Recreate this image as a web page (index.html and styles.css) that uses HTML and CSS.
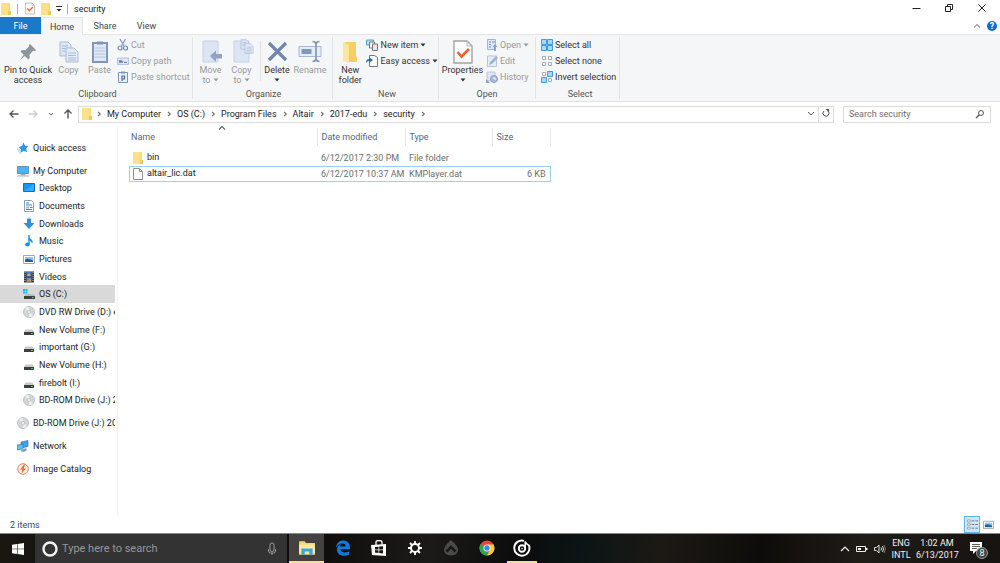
FILE: index.html
```html
<!DOCTYPE html>
<html lang="en">
<head>
  <meta charset="UTF-8" />
  <meta name="viewport" content="width=device-width, initial-scale=1.0" />
  <title>security</title>
  <link rel="stylesheet" href="styles.css">
</head>
<body>
  <!-- shared icons -->
  <svg class="defs" aria-hidden="true">
    <symbol id="folder" viewBox="0 0 12 14">
      <path d="M1 1h9v8l1 1v3H1z" fill="#fbdc7d"/>
      <path d="M1 1h7v12H1z" fill="#ffe08a"/>
      <path d="M8 9h3v4H8z" fill="#f0c75a"/>
    </symbol>
    <symbol id="check" viewBox="0 0 20 26">
      <path d="M1 2h13l5 5v17H1z" fill="#fcfcfc" stroke="#a3a3a3" stroke-width="1.4"/>
      <path d="M14 2v5h5" fill="none" stroke="#b5b5b5"/>
      <path d="M4.500 13l4 4.500L16 10" fill="none" stroke="#f1622b" stroke-width="2.600"/>
    </symbol>
    <symbol id="sheets" viewBox="0 0 20 22">
      <path d="M1 1h8l3 3v11H1z" fill="#dce6f4" stroke="#a9bbd8"/>
      <path d="M3 5h6M3 7.500h6M3 10h4" stroke="#a9bbd8"/>
      <path d="M7 7h8l4 4v10H7z" fill="#e3ebf7" stroke="#a9bbd8"/>
      <path d="M9 12h8M9 14.500h8M9 17h8M9 19h8" stroke="#a9bbd8"/>
    </symbol>
    <symbol id="disc" viewBox="0 0 12 12">
      <circle cx="6" cy="6" r="5.500" fill="#d3d6d8" stroke="#b0b3b5" stroke-width=".7"/>
      <path d="M6 6L2 2.500A5 5 0 0 1 6 1zM6 6l4 3.500A5 5 0 0 1 6 11z" fill="#eceeef"/>
      <circle cx="6" cy="6" r="1.500" fill="#f8f8f8" stroke="#aaa" stroke-width=".6"/>
    </symbol>
    <symbol id="drive" viewBox="0 0 12 12">
      <path d="M2.500 5.500h7L11 8H1z" fill="#c9c9c9"/>
      <path d="M1 8h10v3H1z" fill="#3d4040"/>
      <path d="M8 9h2v1H8z" fill="#58c158"/>
    </symbol>
    <symbol id="image" viewBox="0 0 12 12">
      <path d="M.5 2.500h11v8H.5z" fill="#fff" stroke="#a0a6aa"/>
      <path d="M2 4h8v3H2z" fill="#8cc6ee"/>
      <path d="M2 6.500l3-.8 5 1.500V9H2z" fill="#2d5c91"/>
    </symbol>
    <symbol id="caret" viewBox="0 0 6 6"><path d="M.5 1.500h5L3 4.500z" fill="currentColor"/></symbol>
    <symbol id="sep" viewBox="0 0 6 6"><path d="M2 .8L4.300 3 2 5.200" fill="none" stroke="#666" stroke-width="1.100"/></symbol>
    <symbol id="up" viewBox="0 0 8 8"><path d="M1 5.500L4 2.500l3 3" fill="none" stroke="currentColor" stroke-width="1.200"/></symbol>
  </svg>

  <div class="window">
    <header class="titlebar">
      <svg class="ico-folder"><use href="#folder"/></svg>
      <span class="bar"></span>
      <svg class="ico-quick"><use href="#check"/></svg>
      <svg class="ico-folder"><use href="#folder"/></svg>
      <svg class="ico-menu" viewBox="0 0 6 8"><path d="M0 1.500h6" stroke="#333"/><path d="M.5 4h5L3 6.500z" fill="#222"/></svg>
      <span class="bar"></span>
      <span class="title">security</span>
      <div class="controls">
        <button aria-label="Minimize"><svg viewBox="0 0 10 10"><path d="M1.500 5.500h8" stroke="#222"/></svg></button>
        <button aria-label="Restore"><svg viewBox="0 0 10 10"><path d="M1.500 3.500h5v5h-5zM3.500 3.500v-2h5v5h-2" fill="none" stroke="#222"/></svg></button>
        <button aria-label="Close"><svg viewBox="0 0 10 10"><path d="M1.500 1.500l7 7M8.500 1.500l-7 7" stroke="#222"/></svg></button>
      </div>
    </header>

    <nav class="tabs">
      <button class="tab file">File</button>
      <button class="tab active">Home</button>
      <button class="tab share">Share</button>
      <button class="tab">View</button>
      <div class="tab-tools">
        <button aria-label="Collapse ribbon"><svg class="ico-small"><use href="#up"/></svg></button>
        <button class="help" aria-label="Help">?</button>
      </div>
    </nav>

    <div class="ribbon">
      <section class="group clipboard">
        <div class="tools">
          <button class="big pin">
            <svg viewBox="0 0 24 26"><path d="M14 5l6 6-1 1-2-.3-3.500 4 .2 3.300-1.400 1.400-3.400-3.400L4 21l3.700-5.200-3.300-3.300L6 11l3.300.2 3.600-3.700L13 6z" fill="#8b959e"/></svg>
            <span>Pin to Quick</span>
            <span>access</span>
          </button>
          <button class="big copy" disabled>
            <svg viewBox="-2 -2 24 26"><use href="#sheets" width="20" height="22"/></svg>
            <span>Copy</span>
          </button>
          <button class="big paste" disabled>
            <svg viewBox="0 0 24 26"><path d="M5 4h14v19H5z" fill="#dfe8f5" stroke="#8195bb" stroke-width="2"/><path d="M9 2.500h6v3H9z" fill="#8195bb"/><path d="M7 9h10M7 12h10M7 15h10M7 18h10" stroke="#b6c4dd"/></svg>
            <span>Paste</span>
          </button>
          <div class="stack">
            <button disabled><svg viewBox="0 0 12 12"><path d="M3 0l4 7M8.500 0l-4 7" stroke="#8b9dbd" stroke-width="1.300"/><circle cx="3" cy="9" r="2" fill="none" stroke="#7188b1" stroke-width="1.200"/><circle cx="8.500" cy="9" r="2" fill="none" stroke="#7188b1" stroke-width="1.200"/></svg>Cut</button>
            <button disabled><svg viewBox="0 0 12 12"><path d="M.5 3h11v6.500H.5z" fill="#dbe5f4" stroke="#b4c3de"/><path d="M2 5l1 3 1-3 1 3 1-2M7 7.500h3" fill="none" stroke="#6d82a9"/></svg>Copy path</button>
            <button disabled><svg viewBox="0 0 12 12"><path d="M1.500 1.500h9v10h-9z" fill="#e9eff8" stroke="#7c93bc"/><path d="M4 .5h4v2H4z" fill="#7c93bc"/><path d="M5 10V5h2.500v3H5" fill="none" stroke="#506b9c" stroke-width="1.200"/></svg>Paste shortcut</button>
          </div>
        </div>
        <h2>Clipboard</h2>
      </section>

      <section class="group organize">
        <div class="tools">
          <button class="big narrow" disabled>
            <svg viewBox="0 0 24 26"><path d="M4 2h15v21H4z" fill="#dbe5f4" stroke="#c5d3e8"/><path d="M11 17l6-5.500V15h6v4.500h-6V23z" fill="#91a3c2"/></svg>
            <span>Move</span>
            <span>to <svg class="caret"><use href="#caret"/></svg></span>
          </button>
          <button class="big narrow" disabled>
            <svg viewBox="0 0 24 26"><path d="M4 2h15v21H4z" fill="#dbe5f4" stroke="#c5d3e8"/><use href="#sheets" x="10" y="0" width="14" height="15"/></svg>
            <span>Copy</span>
            <span>to <svg class="caret"><use href="#caret"/></svg></span>
          </button>
          <span class="divider"></span>
          <button class="big delete">
            <svg viewBox="0 0 24 26"><path d="M4 4l17 17M21 4L4 21" stroke="#7186ad" stroke-width="3.200"/></svg>
            <span>Delete</span>
            <span><svg class="caret"><use href="#caret"/></svg></span>
          </button>
          <button class="big" disabled>
            <svg viewBox="0 0 24 26"><path d="M1 7.500h22v10H1z" fill="#e5edf8" stroke="#a6b7d4"/><path d="M3.500 10h10v5h-10z" fill="#8297be"/><path d="M18 5v16M14.500 2.500q3.500 0 3.500 3 0-3 3.500-3M14.500 22.500q3.500 0 3.500-3 0 3 3.500 3" fill="none" stroke="#8297be" stroke-width="1.700"/></svg>
            <span>Rename</span>
          </button>
        </div>
        <h2>Organize</h2>
      </section>

      <section class="group new">
        <div class="tools">
          <button class="big narrow">
            <svg viewBox="0 0 24 26"><path d="M7 3h11v14l1 2v4H7z" fill="#f7ce65"/><path d="M5 3l6 3v18l-6-2z" fill="#ffe69b"/></svg>
            <span>New</span>
            <span>folder</span>
          </button>
          <div class="stack">
            <button><svg viewBox="0 0 12 12"><path d="M.5 1h7v5h-7z" fill="#bfe0f3" stroke="#569dc5"/><path d="M3.500 3h5v6h-5z" fill="#f5f5f5" stroke="#777"/><path d="M6.500 5h5v6.500h-5z" fill="#e8e8e8" stroke="#777"/></svg>New item <svg class="caret"><use href="#caret"/></svg></button>
            <button><svg viewBox="0 0 12 12"><path d="M3.500.5h5l3 2v9h-8z" fill="#fafafa" stroke="#777"/><path d="M0 8q0-4 3-4V2l4 3-4 3V6Q1 6 0 8z" fill="#2b6fb0"/></svg>Easy access <svg class="caret"><use href="#caret"/></svg></button>
          </div>
        </div>
        <h2>New</h2>
      </section>

      <section class="group open">
        <div class="tools">
          <button class="big">
            <svg viewBox="-2 0 24 26"><use href="#check" width="20" height="26"/></svg>
            <span>Properties</span>
            <span><svg class="caret"><use href="#caret"/></svg></span>
          </button>
          <div class="stack">
            <button disabled><svg viewBox="0 0 12 12"><path d="M1.500.5h8v10h-8z" fill="#dce6f4" stroke="#a5b6d3"/><path d="M3 3h2M3 5.500h2M3 8h2M6 3h3" stroke="#768db6"/><path d="M8 12V8H6.500L9 5l2.500 3H10v4z" fill="#8ca0c5"/></svg>Open <svg class="caret"><use href="#caret"/></svg></button>
            <button disabled><svg viewBox="0 0 12 12"><path d="M1.500 1h9v10.500h-9z" fill="#e7eef8" stroke="#b6c4dd"/><path d="M3 10l1-3 6-6 2 2-6 6z" fill="#a2b4d4"/></svg>Edit</button>
            <button disabled><svg viewBox="0 0 12 12"><path d="M1 1h8v9H1z" fill="#dce6f4" stroke="#bac8df"/><circle cx="8" cy="8" r="3.500" fill="#a8b9d8" stroke="#8ba0c6"/><path d="M8 6v2h2" fill="none" stroke="#fff"/><path d="M0 8l4 4H0z" fill="#8ba0c6"/></svg>History</button>
          </div>
        </div>
        <h2>Open</h2>
      </section>

      <section class="group select">
        <div class="tools">
          <div class="stack">
            <button><svg viewBox="0 0 12 12"><path d="M.5.500h5v5h-5zM6.500.500h5v5h-5zM.5 6.500h5v5h-5zM6.500 6.500h5v5h-5z" fill="#a5d7fa" stroke="#3d9be0"/></svg>Select all</button>
            <button><svg viewBox="0 0 12 12"><path d="M1.500 1.500h3v3h-3zM7.500 1.500h3v3h-3zM1.500 7.500h3v3h-3zM7.500 7.500h3v3h-3z" fill="#fff" stroke="#aaa"/></svg>Select none</button>
            <button><svg viewBox="0 0 12 12"><path d="M1.500 1.500h3v3h-3zM7.500 7.500h3v3h-3z" fill="#fff" stroke="#aaa"/><path d="M6.500.500h5v5h-5zM.5 6.500h5v5h-5z" fill="#a5d7fa" stroke="#3d9be0"/></svg>Invert selection</button>
          </div>
        </div>
        <h2>Select</h2>
      </section>
    </div>

    <div class="address">
      <div class="arrows">
        <button aria-label="Back"><svg viewBox="0 0 10 10"><path d="M9.500 5H1M4.500 1.500L1 5l3.500 3.500" fill="none" stroke="#555" stroke-width="1.300"/></svg></button>
        <button aria-label="Forward"><svg viewBox="0 0 10 10"><path d="M.5 5H9M5.500 1.500L9 5 5.500 8.500" fill="none" stroke="#ccc" stroke-width="1.300"/></svg></button>
        <button class="recent" aria-label="Recent locations"><svg viewBox="0 0 6 6"><path d="M1 2l2 2 2-2" fill="none" stroke="#666"/></svg></button>
        <button aria-label="Up"><svg viewBox="0 0 10 10"><path d="M5 9.500V1M1.500 4.500L5 1l3.500 3.500" fill="none" stroke="#555" stroke-width="1.400"/></svg></button>
      </div>
      <div class="path">
        <svg class="ico-folder"><use href="#folder"/></svg>
        <svg class="sep"><use href="#sep"/></svg><a href="#">My Computer</a>
        <svg class="sep"><use href="#sep"/></svg><a href="#">OS (C:)</a>
        <svg class="sep"><use href="#sep"/></svg><a href="#">Program Files</a>
        <svg class="sep"><use href="#sep"/></svg><a href="#">Altair</a>
        <svg class="sep"><use href="#sep"/></svg><a href="#">2017-edu</a>
        <svg class="sep"><use href="#sep"/></svg><a href="#">security</a>
        <svg class="sep"><use href="#sep"/></svg>
        <div class="path-tools">
          <button aria-label="Previous locations"><svg viewBox="0 0 8 8"><path d="M1 3l3 3 3-3" fill="none" stroke="#555"/></svg></button>
          <button class="refresh" aria-label="Refresh"><svg viewBox="0 0 8 8"><path d="M6 2a3 3 0 1 1-4 0" fill="none" stroke="#555"/><path d="M3.500 0h3.500v3.500z" fill="#555"/></svg></button>
        </div>
      </div>
      <div class="search">
        <input type="text" placeholder="Search security" aria-label="Search security">
        <svg viewBox="0 0 10 10"><circle cx="6" cy="4" r="2.500" fill="none" stroke="#555"/><path d="M4.300 5.700L1 9" stroke="#555" stroke-width="1.300"/></svg>
      </div>
    </div>

    <main class="content">
      <nav class="sidebar">
        <a href="#"><svg viewBox="0 0 12 12"><path d="M6.500.500l1.600 3.300 3.400.200-2.400 2.600.9 3.600-3.300-1.500-3 2.100.3-3.600L1.500 5l3.400-.9z" fill="#2e96e8"/><path d="M1 9h3M2 11h2M0 7h3" stroke="#7cbcf0" stroke-width=".8"/></svg>Quick access</a>
        <div class="tree">
          <a class="root" href="#"><svg viewBox="0 0 12 12"><path d="M.5 1.500h11v7H.5z" fill="#47b4f4" stroke="#6b93ac"/><path d="M4 9h4l1 1.500H3z" fill="#a0adb5"/><path d="M0 11h12" stroke="#aab4ba"/></svg>My Computer</a>
          <a href="#"><svg viewBox="0 0 12 12"><path d="M.5 1.500h11v8H.5z" fill="#1596f5" stroke="#0b70c2"/><path d="M1 9L11 2v7z" fill="#30adff"/></svg>Desktop</a>
          <a href="#"><svg viewBox="0 0 12 12"><path d="M1.500.5h7l2 2v9h-9z" fill="#fff" stroke="#8c9fac"/><path d="M3 3h3M3 5h6M7 7.500h2.500M3 9.500h6" stroke="#3a89bb"/><path d="M3 6.500h3v2H3z" fill="#86bde0"/></svg>Documents</a>
          <a href="#"><svg viewBox="0 0 12 12"><path d="M4 .5h4V5h3.500L6 11 .5 5H4z" fill="#338fdd"/></svg>Downloads</a>
          <a href="#"><svg viewBox="0 0 12 12"><path d="M6 .5q0 2.500 3 4.500 1.500 1.500 0 4 0-2.500-3-3.500v4" fill="#1492e8"/><path d="M6 0v9" stroke="#1492e8" stroke-width="1.400"/><ellipse cx="4.500" cy="9.500" rx="2.300" ry="1.900" fill="#1492e8"/></svg>Music</a>
          <a href="#"><svg><use href="#image"/></svg>Pictures</a>
          <a href="#"><svg viewBox="0 0 12 12"><path d="M1 .5h10v11H1z" fill="#383838"/><path d="M3.500 1h5v4.500h-5z" fill="#4c7cc9"/><path d="M3.500 6.500h5V11h-5z" fill="#5e88c4"/><path d="M4 4l2-2 2 3H4zM4 10l3-2 1 2z" fill="#d9a944"/><path d="M2 1v10M10 1v10" stroke="#ccc" stroke-dasharray="1 1"/></svg>Videos</a>
          <a class="current" href="#"><svg viewBox="0 0 12 12"><path d="M0 1h2v2H0zM2.500 1h2v2h-2zM0 3.500h2v2H0zM2.500 3.500h2v2h-2z" fill="#18b5f0"/><path d="M3.500 6h7L12 8H1z" fill="#bbb"/><path d="M1 8h11v3H1z" fill="#3d4040"/><path d="M9 9h2v1H9z" fill="#58c158"/></svg>OS (C:)</a>
          <a href="#"><svg><use href="#disc"/></svg>DVD RW Drive (D:) e</a>
          <a href="#"><svg><use href="#drive"/></svg>New Volume (F:)</a>
          <a href="#"><svg><use href="#drive"/></svg>important (G:)</a>
          <a href="#"><svg><use href="#drive"/></svg>New Volume (H:)</a>
          <a href="#"><svg><use href="#drive"/></svg>firebolt (I:)</a>
          <a href="#"><svg><use href="#disc"/></svg>BD-ROM Drive (J:) 2</a>
        </div>
        <a href="#"><svg><use href="#disc"/></svg>BD-ROM Drive (J:) 201</a>
        <a href="#"><svg viewBox="0 0 12 12"><path d="M4 2l7-1.500v6L4 8z" fill="#40a4e5" stroke="#276f9f" stroke-width=".6"/><path d="M0 5l6-1v5l-6 1z" fill="#63bef2" stroke="#276f9f" stroke-width=".6"/><path d="M3 11l6-3 1 2-3 2z" fill="#7f9cae"/></svg>Network</a>
        <a href="#"><svg viewBox="0 0 12 12"><circle cx="6" cy="6" r="5.300" fill="#fff3ea" stroke="#cb6a3c" stroke-width=".8"/><path d="M7 1.500L3 6.500h2.500L4.500 10.500 9 5.500H6.500L8 1.500z" fill="#ef6522"/></svg>Image Catalog</a>
      </nav>

      <div class="files">
        <table>
          <thead>
            <tr>
              <th class="name">Name<svg class="sort"><use href="#up"/></svg></th>
              <th class="date">Date modified</th>
              <th class="type">Type</th>
              <th class="size">Size</th>
            </tr>
          </thead>
          <tbody>
            <tr>
              <td><svg><use href="#folder"/></svg>bin</td>
              <td>6/12/2017 2:30 PM</td>
              <td>File folder</td>
              <td></td>
            </tr>
            <tr class="focused">
              <td><svg viewBox="0 0 12 14"><path d="M1.500 1.500h6l3 3v8h-9z" fill="#fff" stroke="#909090"/><path d="M7.500 1.500v3h3" fill="none" stroke="#909090"/></svg>altair_lic.dat</td>
              <td>6/12/2017 10:37 AM</td>
              <td>KMPlayer.dat</td>
              <td>6 KB</td>
            </tr>
          </tbody>
        </table>
      </div>
    </main>

    <footer class="status">
      <span>2 items</span>
      <div class="views">
        <button class="on" aria-label="Details view"><svg viewBox="0 0 12 12"><path d="M.5 1h3v2h-3zM.5 5h3v2h-3zM.5 9h3v2h-3z" fill="#fff" stroke="#a87979" stroke-width=".7"/><path d="M5 2h3M9 2h3M5 6h3M9 6h3M5 10h3M9 10h3" stroke="#607b8b"/></svg></button>
        <button aria-label="Large icons view"><svg><use href="#image"/></svg></button>
      </div>
    </footer>
  </div>

  <div class="taskbar">
    <button class="start" aria-label="Start"><svg viewBox="0 0 12 12"><path d="M0 1.700l5-.7v4.700H0zM5.600.9L12 0v5.700H5.600zM0 6.300h5V11l-5-.7zM5.600 6.300H12V12l-6.400-.9z" fill="#fff"/></svg></button>
    <label class="cortana">
      <svg class="ring" viewBox="0 0 16 16"><circle cx="8" cy="8" r="6.500" fill="none" stroke="#f2f2f2" stroke-width="2.400"/></svg>
      <input type="text" placeholder="Type here to search" aria-label="Type here to search">
      <svg class="mic" viewBox="0 0 10 14"><path d="M3 3q0-2 2-2t2 2v5q0 1.500-2 1.500T3 8zM1.500 7v2q0 2 2 2h3q2 0 2-2V7M5 11v2" fill="none" stroke="#999"/></svg>
    </label>
    <div class="apps">
      <button class="running active" aria-label="File Explorer"><svg viewBox="0 0 16 16"><path d="M1 2h5l1 1.500h8V14H1z" fill="#f7d774"/><path d="M1 5h14v8H1z" fill="#ffe9a2"/><path d="M3 14V8.500h10V14h-3v-3H6v3z" fill="#3ba7dc"/></svg></button>
      <button aria-label="Edge"><svg viewBox="0 0 16 16"><path d="M1 7.500C1.500 3 4.500.5 8.300.5 12.500.5 15 3.500 15 7.500v1.800H5.500c.2 2.200 2 3.200 4.300 3.200 1.700 0 3.200-.5 4.400-1.200v3.200c-1.400.8-3.200 1.200-5.200 1.200-4.300 0-7-2.400-7-6 0-2.500 1.500-4.600 4-5.700-.6.800-.9 1.700-.9 2.500h5.600c0-1.900-.9-2.900-3-2.900-2.600 0-5 1.400-6.700 3.900z" fill="#0e7bdc"/></svg></button>
      <button aria-label="Store"><svg viewBox="0 0 16 16"><path d="M0 5l15-1v12L1 15z" fill="#fff"/><path d="M5 5V2q0-1.500 3-1.500T11 2v2.500" fill="none" stroke="#fff" stroke-width="1.300"/><path d="M4 7l3.500-.3v2.800H4zM8.200 6.600L12 6.300v3.200H8.200zM4 10.200h3.500V13L4 12.600zM8.200 10.200H12v3.200l-3.800-.4z" fill="#151515"/></svg></button>
      <button aria-label="Settings"><svg viewBox="0 0 16 16"><circle cx="8" cy="8" r="4" fill="none" stroke="#fff" stroke-width="2"/><path d="M8 1v3M8 12v3M1 8h3M12 8h3M3 3l2 2M11 11l2 2M13 3l-2 2M5 11l-2 2" stroke="#fff" stroke-width="1.800"/></svg></button>
      <button aria-label="Launcher"><svg viewBox="0 0 16 16"><path d="M8 0q7 6 7 10 0 5-7 5.500Q1 15 1 10q0-4 7-10z" fill="#4a4a4a"/><path d="M3.500 11.500L8 7l4.500 4.500" fill="none" stroke="#191919" stroke-width="2.500"/></svg></button>
      <button aria-label="Chrome"><svg viewBox="0 0 16 16"><circle cx="8" cy="8" r="7.500" fill="#e8453c"/><path d="M1.500 4.200L8 8l0 7.500A7.500 7.500 0 0 1 1.500 4.200z" fill="#2fa653"/><path d="M8 4.500h6.600A7.500 7.500 0 0 1 8 15.500L11 10z" fill="#fbcd38"/><circle cx="8" cy="8" r="3.500" fill="#fff"/><circle cx="8" cy="8" r="2.700" fill="#4683ed"/></svg></button>
      <button class="running" aria-label="Groove Music"><svg viewBox="0 0 18 18"><path d="M11 1.800A7.600 7.600 0 1 0 15.800 6" fill="none" stroke="#fff" stroke-width="1.900"/><circle cx="9" cy="9.500" r="3.200" fill="none" stroke="#fff" stroke-width="1.900"/><circle cx="9" cy="9.500" r=".8" fill="#fff"/><path d="M12.200 9V2.500q.5 2 3.600 3.800" fill="none" stroke="#fff" stroke-width="1.500"/></svg></button>
    </div>
    <div class="tray">
      <svg class="more" viewBox="0 0 10 10"><path d="M1 7l4-4 4 4" fill="none" stroke="#eee" stroke-width="1.200"/></svg>
      <svg class="battery" viewBox="0 0 12 10"><path d="M.5 2.500h9v5h-9z" fill="none" stroke="#eee"/><path d="M2 4h3v2H2zM10 4h1.500v2H10z" fill="#fff"/></svg>
      <svg class="sound" viewBox="0 0 12 10"><path d="M.5 3.500h2L5 1v8L2.500 6.500h-2z" fill="none" stroke="#ddd"/><path d="M7 3.500q1 1.500 0 3M8.500 2q2 3 0 6" fill="none" stroke="#ddd"/><path d="M10 1q3 4 0 8" fill="none" stroke="#777"/></svg>
      <div class="lang">ENG<br>INTL</div>
      <div class="clock">1:02 AM<br>6/13/2017</div>
      <button class="notify" aria-label="Notifications">
        <svg viewBox="0 0 12 12"><path d="M0 0h12v9H6l-3 3V9H0z" fill="#fff"/><path d="M2 2.500h8M2 4.500h8M2 6.500h5" stroke="#333" stroke-width=".8"/></svg>
        <span class="badge">8</span>
      </button>
    </div>
  </div>
</body>
</html>
```
FILE: styles.css
```css
* {
  box-sizing: border-box;
}
body {
  margin: 0;
  height: 100vh;
  display: flex;
  flex-direction: column;
  overflow: hidden;
  background: #fff;
  color: #222;
  font-family: Roboto, "Open Sans", sans-serif;
  font-size: 9px;
  line-height: 10px;
}
button, input {
  font: inherit;
  color: inherit;
  background: none;
  border: 0;
  padding: 0;
  margin: 0;
}
a {
  color: inherit;
  text-decoration: none;
}
svg {
  flex: none;
}
.defs {
  display: none;
}
.window {
  flex: 1;
  min-height: 0;
  display: flex;
  flex-direction: column;
}

/* title bar */
.titlebar {
  display: flex;
  align-items: center;
  height: 17px;
}
.ico-folder {
  width: 12px;
  height: 14px;
}
.ico-quick {
  width: 10px;
  height: 13px;
  margin-right: 5px;
}
.ico-menu {
  width: 6px;
  height: 8px;
  margin-left: 4px;
}
.bar {
  width: 1px;
  height: 10px;
  margin: 0 7px 0 5px;
  background: #aaa;
}
.title {
  margin-left: -1px;
}
.controls {
  display: flex;
  margin-left: auto;
  padding-right: 2px;
}
.controls button {
  width: 33px;
  height: 16px;
}
.controls svg {
  width: 10px;
  height: 10px;
}

/* tabs */
.tabs {
  display: flex;
  height: 18px;
  border-bottom: 1px solid #e3e5e7;
}
.tab {
  width: 39px;
  height: 17px;
  color: #444;
}
.tab.file {
  width: 41px;
  background: #1979ca;
  color: #fff;
}
.tab.active {
  width: 42px;
  height: 18px;
  background: #f5f6f7;
  border: 1px solid #e3e5e7;
  border-bottom: 0;
}
.tab.share {
  width: 44px;
}
.tab-tools {
  display: flex;
  align-items: center;
  gap: 6px;
  margin-left: auto;
  padding-right: 3px;
  color: #999;
}
.ico-small {
  display: block;
  width: 8px;
  height: 8px;
}
.help {
  width: 10px;
  height: 10px;
  border-radius: 50%;
  background: #0c6fc9;
  color: #fff;
  font-weight: bold;
  line-height: 10px;
}

/* ribbon */
.ribbon {
  display: flex;
  height: 67px;
  background: #f5f6f7;
  border-bottom: 1px solid #dfe1e3;
  color: #333;
}
.group {
  display: flex;
  flex-direction: column;
  justify-content: space-between;
  margin: 2px 0;
  border-right: 1px solid #e1e3e5;
}
.group h2 {
  margin: 0;
  font-size: 9px;
  font-weight: normal;
  line-height: 10px;
  text-align: center;
  color: #555;
}
.clipboard {
  width: 193px;
  padding-left: 3px;
}
.organize {
  width: 140px;
  padding-left: 2px;
}
.new {
  width: 106px;
  padding-left: 3px;
}
.open {
  width: 97px;
}
.select {
  width: 84px;
  padding-left: 5px;
}
.tools {
  display: flex;
}
.big {
  display: flex;
  flex-direction: column;
  align-items: center;
  width: 38px;
  padding-top: 2px;
  white-space: nowrap;
}
.big > svg {
  width: 24px;
  height: 26px;
}
.big.pin {
  width: 50px;
}
.big.copy, .big.paste {
  width: 31px;
}
.big.narrow {
  width: 31px;
}
.big.delete {
  width: 28px;
}
button:disabled {
  color: #999;
}
.caret {
  width: 6px;
  height: 6px;
}
.open .big {
  width: 47px;
}
.divider {
  width: 1px;
  height: 40px;
  margin: 4px 2px 0 3px;
  background: #dcdfe2;
}
.stack {
  display: flex;
  flex-direction: column;
}
.clipboard .stack, .new .stack {
  padding-left: 2px;
}
.stack button {
  display: flex;
  align-items: center;
  gap: 2px;
  height: 16px;
  white-space: nowrap;
}
.stack button > svg:first-child {
  width: 12px;
  height: 12px;
}

/* address bar */
.address {
  display: flex;
  align-items: center;
  height: 24px;
  padding-right: 9px;
}
.arrows {
  display: flex;
  align-items: center;
  justify-content: space-between;
  width: 64px;
  margin: 0 5px 0 9px;
}
.arrows svg {
  display: block;
  width: 10px;
  height: 10px;
}
.arrows .recent svg {
  width: 6px;
  height: 6px;
}
.path {
  flex: 1;
  display: flex;
  align-items: center;
  height: 17px;
  padding-left: 2px;
  border: 1px solid #dcdcdc;
}
.sep {
  width: 6px;
  height: 6px;
  margin: 0 5px;
}
.path .ico-folder {
  margin-right: -2px;
}
.path-tools {
  display: flex;
  align-items: center;
  align-self: stretch;
  margin-left: auto;
}
.path-tools button {
  width: 15px;
  height: 100%;
}
.path-tools .refresh {
  border-left: 1px solid #dcdcdc;
}
.path-tools svg {
  width: 8px;
  height: 8px;
}
.search {
  display: flex;
  align-items: center;
  width: 148px;
  height: 17px;
  margin-left: 9px;
  padding: 0 5px;
  border: 1px solid #dcdcdc;
}
.search input {
  flex: 1;
  min-width: 0;
}
.search input::placeholder {
  color: #6d6d6d;
}
.search svg {
  width: 10px;
  height: 10px;
}

/* content */
.content {
  flex: 1;
  min-height: 0;
  display: flex;
}
.sidebar {
  display: flex;
  flex-direction: column;
  gap: 5px;
  width: 118px;
  padding: 13px 2px 0 0;
  border-right: 1px solid #f3f3f3;
}
.sidebar a {
  display: flex;
  align-items: center;
  gap: 4px;
  height: 18px;
  padding-left: 17px;
  overflow: hidden;
  white-space: nowrap;
}
.sidebar svg {
  width: 12px;
  height: 12px;
}
.tree {
  display: grid;
  grid-template-rows: repeat(14, 1fr);
  height: 247px;
}
.tree a {
  height: auto;
  padding-left: 23px;
}
.tree a.root {
  padding-left: 17px;
}
.tree .current {
  background: #d9d9d9;
}
.files {
  flex: 1;
  padding: 2px 0 0 11px;
}
.files table {
  width: 422px;
  table-layout: fixed;
  border-collapse: collapse;
}
.files th {
  position: relative;
  height: 18px;
  padding: 0 0 0 4px;
  border-right: 1px solid #e5e5e5;
  font-weight: normal;
  text-align: left;
  color: #56667a;
}
.files .name {
  width: 188px;
  padding-left: 2px;
}
.files .date {
  width: 88px;
}
.files .type {
  width: 87px;
}
.files .sort {
  position: absolute;
  top: -4px;
  left: 89px;
  width: 8px;
  height: 8px;
}
.files tbody::before {
  content: "";
  display: block;
  height: 4px;
}
.files td {
  height: 16px;
  padding: 0 0 0 4px;
  white-space: nowrap;
  color: #6d6d6d;
}
.files td:first-child {
  padding-left: 3px;
  color: #222;
}
.files td:last-child {
  padding-right: 5px;
  text-align: right;
}
.files td svg {
  width: 12px;
  height: 14px;
  margin-right: 3px;
  vertical-align: middle;
}
.files .focused {
  outline: 1px solid #99d1f5;
  outline-offset: -1px;
}

/* status bar */
.status {
  display: flex;
  align-items: center;
  height: 17px;
  padding: 0 4px 0 10px;
  color: #2c4a75;
}
.views {
  display: flex;
  margin-left: auto;
}
.views button {
  display: flex;
  align-items: center;
  justify-content: center;
  width: 16px;
  height: 17px;
}
.views .on {
  border: 1px solid #58b8e2;
  background: #cce8f6;
}
.views svg {
  width: 11px;
  height: 11px;
}

/* taskbar */
.taskbar {
  display: flex;
  height: 30px;
  border-top: 1px solid #888;
  background: linear-gradient(100deg, #1a1612 0%, #0d0c0b 30%, #1b1a19 43%, #0c0c0c 52%, #0b1414 58%, #1c1915 66%, #0e0c0a 76%, #1f1b17 86%, #171310 100%);
  color: #f2f2f2;
}
.start {
  width: 35px;
}
.start svg {
  display: block;
  width: 12px;
  height: 12px;
  margin: 0 auto;
}
.cortana {
  display: flex;
  align-items: center;
  width: 252px;
  padding: 0 10px 0 7px;
  background: #333;
}
.ring {
  width: 16px;
  height: 16px;
}
.cortana input {
  flex: 1;
  min-width: 0;
  margin-left: 4px;
  font-size: 11px;
  line-height: 16px;
}
.cortana input::placeholder {
  color: #979797;
}
.mic {
  width: 10px;
  height: 14px;
}
.apps {
  display: flex;
  gap: 1px;
  margin-left: 2px;
}
.apps button {
  display: flex;
  align-items: center;
  justify-content: center;
  width: 35px;
  border-bottom: 2px solid transparent;
}
.apps svg {
  width: 16px;
  height: 16px;
}
.apps .running {
  border-color: #f5e08b;
}
.apps .running:last-child {
  width: 30px;
  margin-left: 2px;
}
.apps .active {
  background: #444240;
}
.apps .running svg {
  width: 18px;
  height: 18px;
}
.tray {
  display: flex;
  align-items: center;
  margin-left: auto;
  padding-right: 12px;
  line-height: 12px;
  text-align: center;
}
.more {
  width: 10px;
  height: 10px;
}
.battery, .sound {
  width: 12px;
  height: 10px;
  margin-left: 6px;
}
.lang {
  width: 20px;
  margin-left: 5px;
}
.clock {
  width: 42px;
  margin-left: 5px;
}
.notify {
  position: relative;
  width: 18px;
  height: 20px;
  margin-left: 12px;
  text-align: left;
}
.notify svg {
  display: block;
  width: 12px;
  height: 12px;
  margin-top: -2px;
}
.badge {
  position: absolute;
  right: 0;
  bottom: 0;
  width: 12px;
  height: 12px;
  border: 1px solid #999;
  border-radius: 50%;
  background: #444;
  font-size: 9px;
  line-height: 10px;
  text-align: center;
}
```
